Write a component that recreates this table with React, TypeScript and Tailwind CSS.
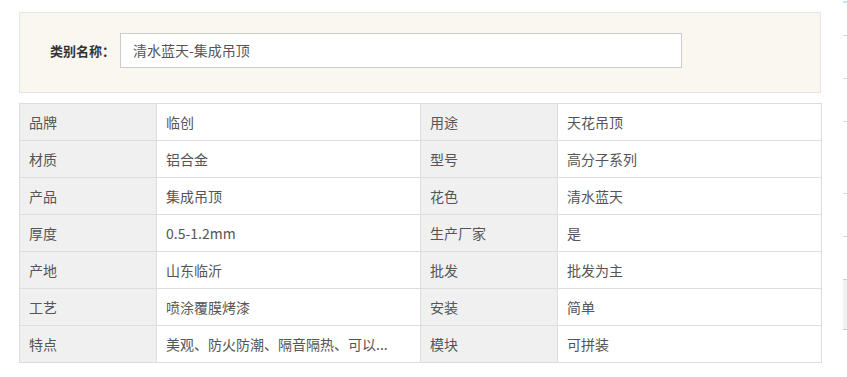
const rows: [string, string, string, string][] = [
  ['品牌', '临创', '用途', '天花吊顶'],
  ['材质', '铝合金', '型号', '高分子系列'],
  ['产品', '集成吊顶', '花色', '清水蓝天'],
  ['厚度', '0.5-1.2mm', '生产厂家', '是'],
  ['产地', '山东临沂', '批发', '批发为主'],
  ['工艺', '喷涂覆膜烤漆', '安装', '简单'],
  ['特点', '美观、防火防潮、隔音隔热、可以...', '模块', '可拼装'],
]

export default function App() {
  return (
    <div
      className="w-[847px] h-[377px] bg-white flex text-[14px] text-[#555]"
      style={{ fontFamily: '"Microsoft YaHei", "Noto Sans CJK SC", "Noto Sans", sans-serif' }}
    >
      <div className="ml-[19px] w-[802px] pt-[12px]">
        {/* category name */}
        <div className="h-[81px] border border-[#e6e6e6] bg-[#faf7f0] pl-[30px] pt-[20px] flex items-start">
          <div className="h-[35px] w-[70px] flex items-center font-bold text-[#333] text-[13px]">类别名称：</div>
          <div className="h-[35px] w-[562px] border border-[#cccccc] bg-white flex items-center px-[12px] text-[#555]">
            清水蓝天-集成吊顶
          </div>
        </div>

        {/* spec table */}
        <table className="mt-[10px] w-[802px] border-collapse table-fixed">
          <colgroup>
            <col className="w-[137px]" />
            <col className="w-[264px]" />
            <col className="w-[137px]" />
            <col className="w-[264px]" />
          </colgroup>
          <tbody>
            {rows.map((r, i) => (
              <tr key={i} className="h-[37px]">
                <td className="border border-[#dddddd] bg-[#f0f0f0] pl-[9px] p-0">{r[0]}</td>
                <td className="border border-[#dddddd] pl-[9px] p-0">{r[1]}</td>
                <td className="border border-[#dddddd] bg-[#f0f0f0] pl-[9px] p-0">{r[2]}</td>
                <td className="border border-[#dddddd] pl-[9px] p-0">{r[3]}</td>
              </tr>
            ))}
          </tbody>
        </table>
      </div>

      {/* clipped sidebar edge */}
      <div className="ml-auto w-[4px] flex flex-col">
        <div className="mt-[1px] h-[2px] bg-[#cfe2f3]" />
        <div className="mt-[32px] h-px bg-[#c5daea]" />
        <div className="mt-[42px] h-px bg-[#c5daea]" />
        <div className="mt-[42px] h-px bg-[#c5daea]" />
        <div className="mt-[71px] h-px bg-[#c5daea]" />
        <div className="mt-[42px] h-px bg-[#c5daea]" />
        <div className="mt-[42px] h-[51px] bg-[#f0f0f0] border-t border-b border-[#cccccc]" />
      </div>
    </div>
  )
}
